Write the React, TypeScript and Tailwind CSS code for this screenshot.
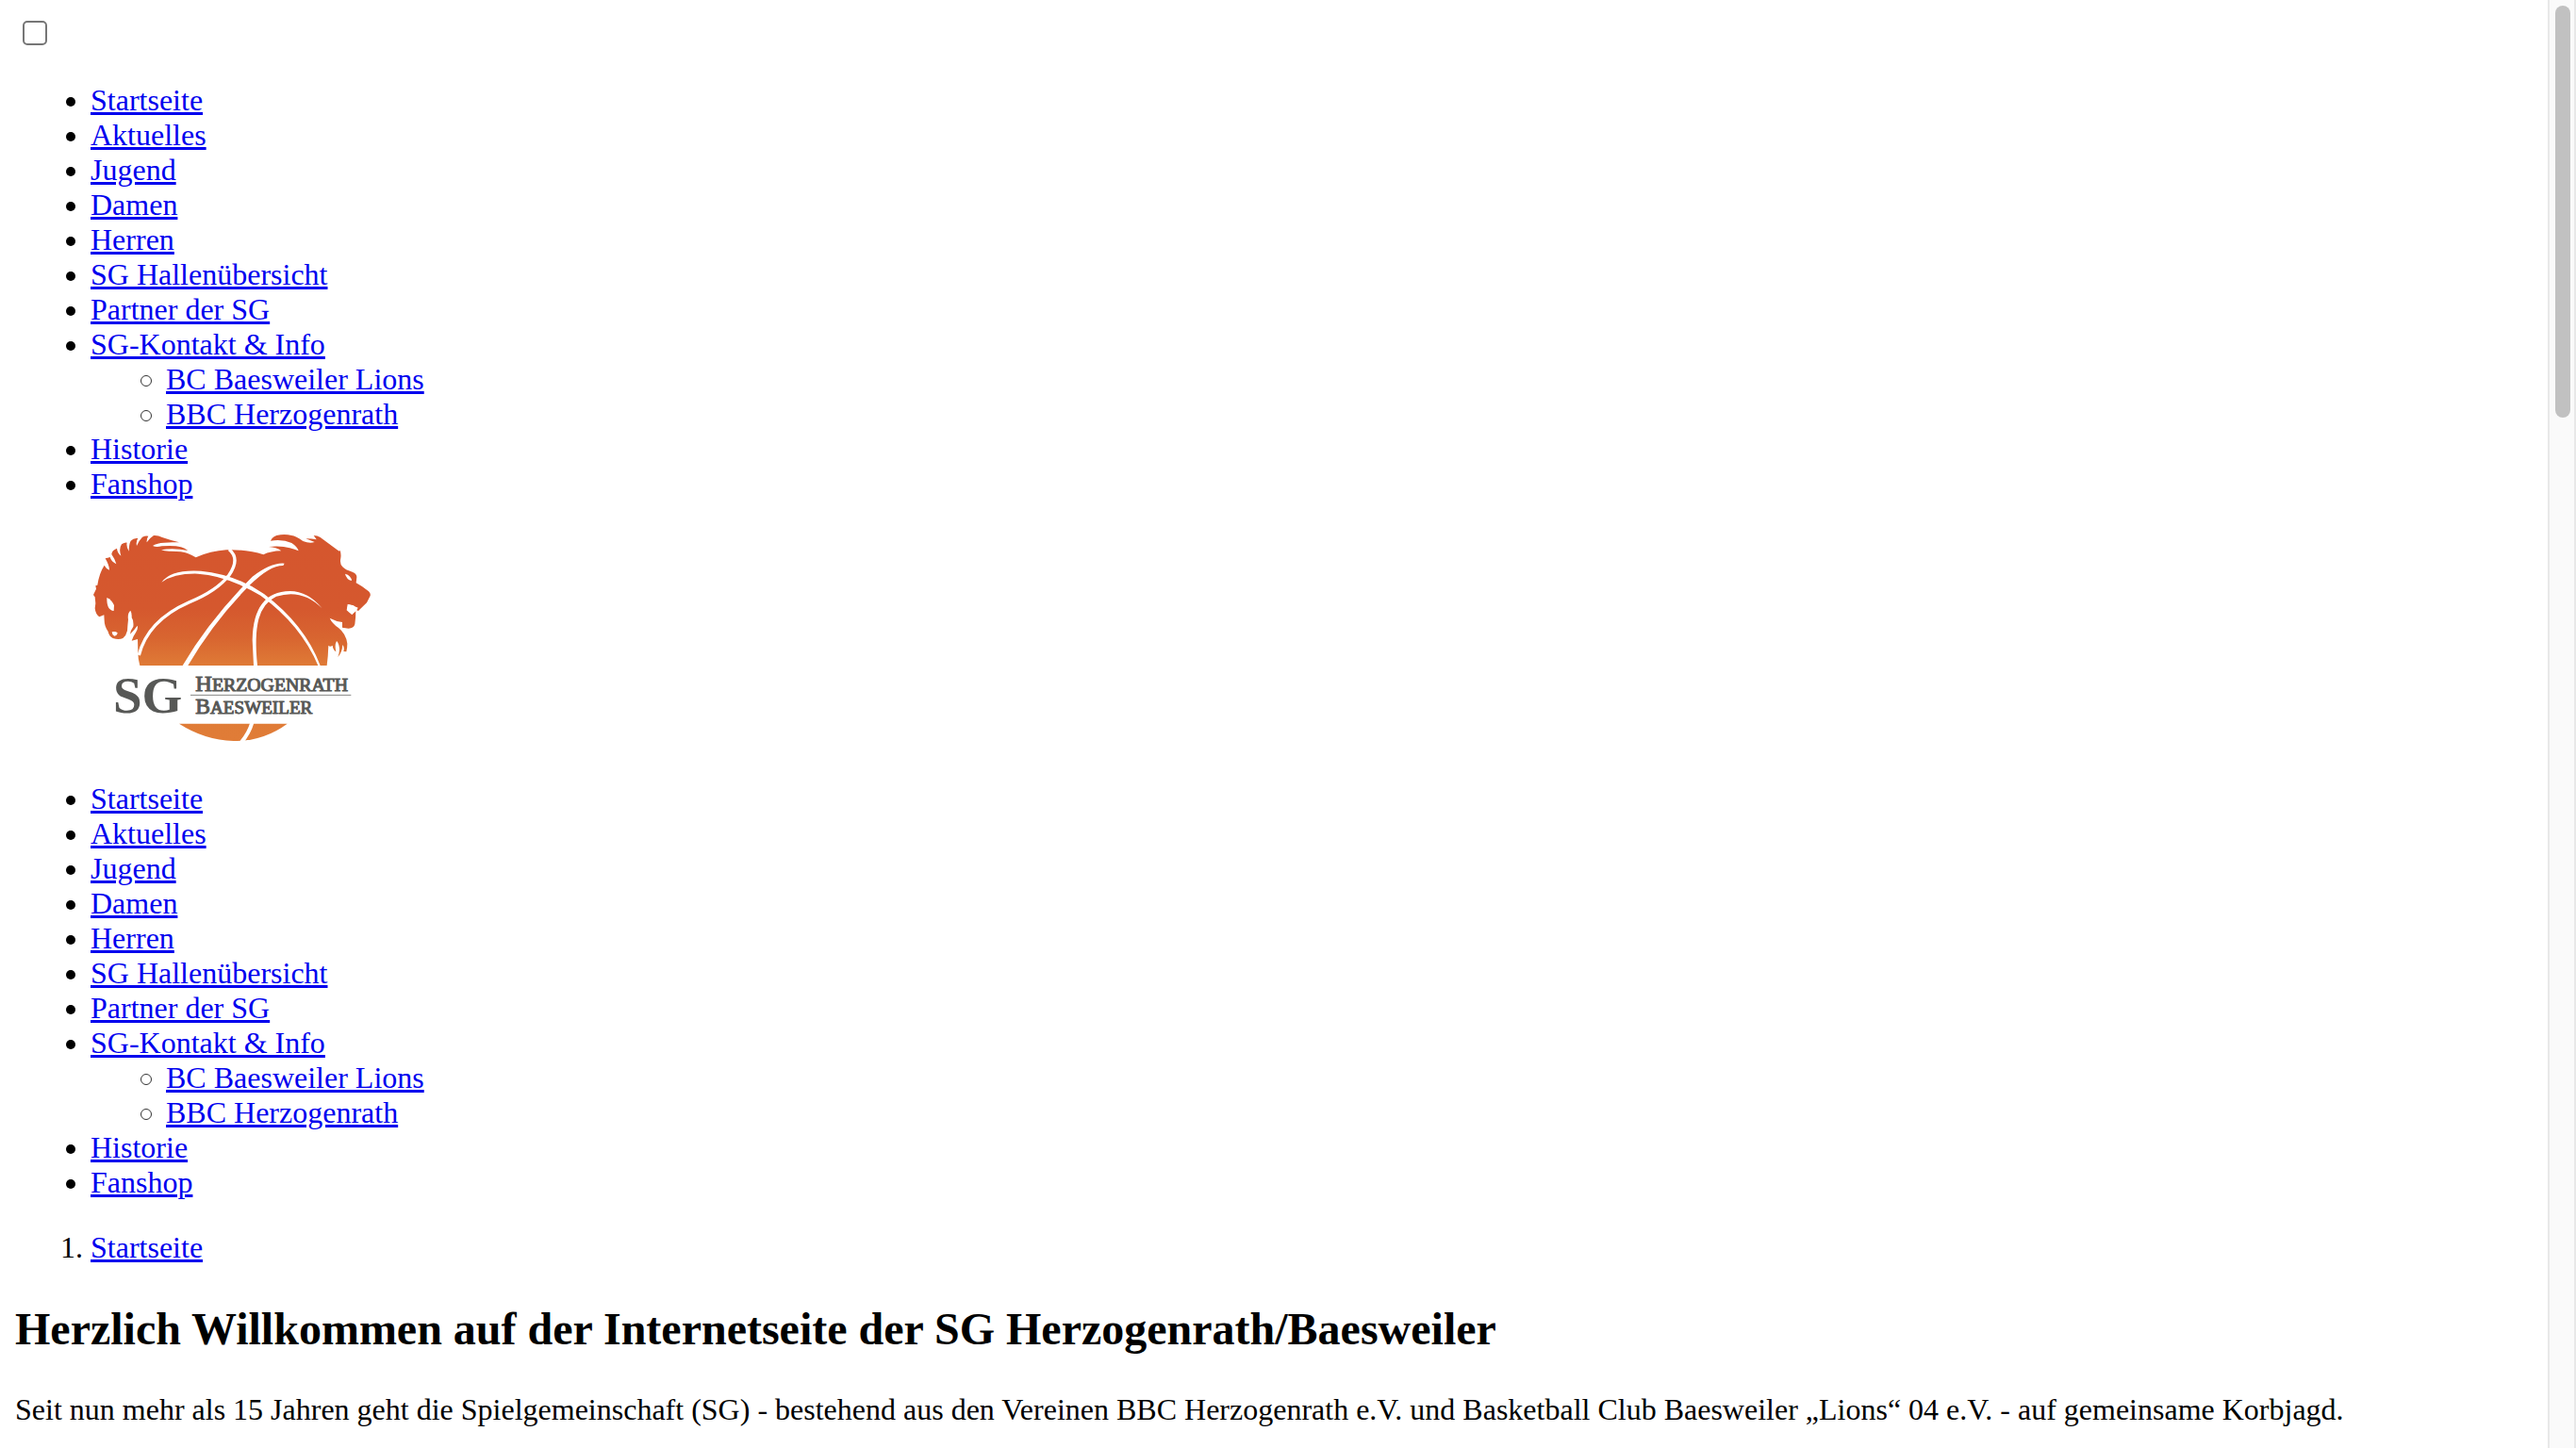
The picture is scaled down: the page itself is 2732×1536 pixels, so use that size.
import React from "react";

type Item = { label: string; children?: string[] };

const menu: Item[] = [
  { label: "Startseite" },
  { label: "Aktuelles" },
  { label: "Jugend" },
  { label: "Damen" },
  { label: "Herren" },
  { label: "SG Hallenübersicht" },
  { label: "Partner der SG" },
  { label: "SG-Kontakt & Info", children: ["BC Baesweiler Lions", "BBC Herzogenrath"] },
  { label: "Historie" },
  { label: "Fanshop" },
];

function Link({ children }: { children: React.ReactNode }) {
  return (
    <a href="#" className="text-[#0000ee] underline decoration-[3px] underline-offset-[2px]">
      {children}
    </a>
  );
}

function Menu() {
  return (
    <ul className="pl-[54px]">
      {menu.map((item) => (
        <li key={item.label}>
          <div className="flex h-[37px]">
            <span className="mt-[15px] mr-4 size-[10px] shrink-0 rounded-full bg-black" />
            <Link>{item.label}</Link>
          </div>
          {item.children && (
            <ul className="pl-[79px]">
              {item.children.map((label) => (
                <li key={label} className="flex h-[37px]">
                  <span className="mt-[14px] mr-[15px] size-[12px] shrink-0 rounded-full border border-[#333]" />
                  <Link>{label}</Link>
                </li>
              ))}
            </ul>
          )}
        </li>
      ))}
    </ul>
  );
}

function Logo() {
  return (
    <svg className="ml-20 block h-[233px] w-[304px]" viewBox="48 42 912 699">
      <defs>
        <linearGradient id="ball" gradientUnits="userSpaceOnUse" x1="0" y1="50" x2="0" y2="710">
          <stop offset="0" stopColor="#d5562e" />
          <stop offset="0.36" stopColor="#d5582e" />
          <stop offset="0.5" stopColor="#d86530" />
          <stop offset="0.63" stopColor="#df7a36" />
          <stop offset="1" stopColor="#e07c37" />
        </linearGradient>
      </defs>
      <path
        fill="url(#ball)"
        d="M205 468 Q199 450 199 424 L198 384 L179 389 Q184 374 192 363 Q200 351 197 341 Q188 354 174 368 Q175 356 184 344 Q186 325 179 315 Q180 300 175 293 Q165 301 168 322 Q166 340 165 357 Q162 372 151 381 Q138 387 119 381 Q107 375 104 360 Q92 343 92 325 L91 307 L76 313 Q64 305 62 286 L64 270 L62 250 L57 243 L66 224 L64 214 L70 212 Q76 173 92 149 Q96 158 108 164 Q108 150 95 127 Q103 126 110 123 Q114 137 130 145 Q127 131 115 114 Q116 101 132 95 Q133 109 145 119 Q137 97 147 82 Q156 76 164 77 Q161 90 170 104 Q170 82 176 71 Q185 61 199 63 Q192 72 195 87 Q202 70 213 59 Q223 54 232 56 Q226 64 227 76 Q235 63 249 54 Q263 53 276 60 Q305 70 330 76 Q285 74 262 80 Q251 82 246 87 Q256 92 275 88 Q315 85 336 91 Q348 95 358 102 Q310 92 273 100 Q285 105 304 104 Q340 104 357 111 Q371 116 383 124 Q430 103 480 100 Q550 98 598 115 Q620 104 655 103 Q639 91 615 90 Q655 86 682 94 Q699 98 710 103 Q706 90 688 78 Q659 65 621 71 Q626 59 640 54 Q665 48 688 54 Q701 56 724 72 Q744 80 761 75 L733 64 Q752 64 767 67 L758 54 Q770 54 779 60 L835 101 L840 104 L842 101 Q846 112 844 126 Q840 145 850 154 Q861 165 881 170 Q896 176 895 187 L893 205 Q912 215 933 232 Q940 238 938 246 L927 268 L900 294 L894 291 L898 285 Q889 284 885 277 L868 273 L865 287 L880 306 L892 295 Q892 315 889 337 Q885 350 869 350 L849 347 L849 330 Q828 327 809 317 Q817 334 837 348 Q861 367 865 398 Q865 412 862 424 L853 423 Q857 410 850 402 Q849 426 835 441 Q843 421 838 403 Q834 391 831 390 Q824 402 829 424 Q819 417 818 404 Q810 410 805 404 Q804 438 800 468 Z"
      />
      <path fill="url(#ball)" d="M330 653 H674 Q600 708 503 708 Q411 705 330 653 Z" />
      <g fill="#fff">
        <path d="M100 252 Q116 259 123 276 L122 294 Q99 292 100 252 Z" />
        <path d="M116 361 Q127 358 134 364 Q132 374 124 374 Q116 370 116 361 Z" />
        <path d="M858 176 Q877 181 879 198 Q862 194 858 176 Z" />
        <path d="M866 273 L885 278 L899 284 L893 294 L884 294 L880 306 Q871 300 863 292 Z" />
        <path d="M274 203 Q304 161 399 167 Q510 178 600 240 Q730 338 779 468 H772 Q718 339 589 245 Q480 181 390 176 Q315 174 274 203 Z" />
        <path d="M785 286 Q741 232 682 231 Q566 233 563 386 L567 468 H579 Q569 374 583 320 Q597 268 639 248 Q722 222 785 286 Z" />
        <path d="M665 143 Q624 139 563 185 Q424 326 341 468 H358 Q442 325 556 211 Q619 149 661 150 Z" />
      </g>
      <path d="M489 98 Q525 128 489 180 Q451 230 361 267 Q230 325 202 435" fill="none" stroke="#fff" strokeWidth="10" />
      <path d="M562 650 Q552 684 528 712" fill="none" stroke="#fff" strokeWidth="12" />
      <g fill="#575856" fontFamily="'Liberation Serif', serif">
        <text x="120" y="617" fontSize="164" fontWeight="700" textLength="220" lengthAdjust="spacingAndGlyphs">SG</text>
        <g stroke="#575856" strokeWidth="3">
          <text x="382" y="549" fontSize="69" textLength="485" lengthAdjust="spacingAndGlyphs">
            H<tspan fontSize="56">ERZOGENRATH</tspan>
          </text>
          <text x="382" y="620" fontSize="69" textLength="372" lengthAdjust="spacingAndGlyphs">
            B<tspan fontSize="56">AESWEILER</tspan>
          </text>
        </g>
      </g>
      <path d="M366 562 H877" stroke="#858684" strokeWidth="3" />
    </svg>
  );
}

export default function App() {
  return (
    <div className="flex h-[1536px] overflow-hidden bg-white font-['Liberation_Serif',serif] text-[32px] leading-[37px] text-black">
      <main className="min-w-0 flex-1 px-4">
        <div className="h-[88px] pt-[22px] pl-2">
          <input
            type="checkbox"
            aria-label="Menü"
            className="block size-[26px] appearance-none rounded-[5px] border-2 border-[#767676] bg-white"
          />
        </div>
        <Menu />
        <div className="py-8">
          <Logo />
        </div>
        <Menu />
        <ol className="mt-8 pl-[48px]">
          <li className="flex">
            <span className="w-8 shrink-0">1.</span>
            <Link>Startseite</Link>
          </li>
        </ol>
        <h2 className="my-10 text-[48px] leading-[55px] font-bold">
          Herzlich Willkommen auf der Internetseite der SG Herzogenrath/Baesweiler
        </h2>
        <p className="whitespace-nowrap">
          Seit nun mehr als 15 Jahren geht die Spielgemeinschaft (SG) - bestehend aus den Vereinen BBC Herzogenrath e.V.
          und Basketball Club Baesweiler „Lions“ 04 e.V. - auf gemeinsame Korbjagd.
        </p>
      </main>
      <div className="w-[30px] shrink-0 border-x-2 border-[#e8e8e8] bg-[#fafafa] pt-[6px] pl-[6px]">
        <div className="h-[437px] w-4 rounded-full bg-[#c1c1c1]" />
      </div>
    </div>
  );
}
